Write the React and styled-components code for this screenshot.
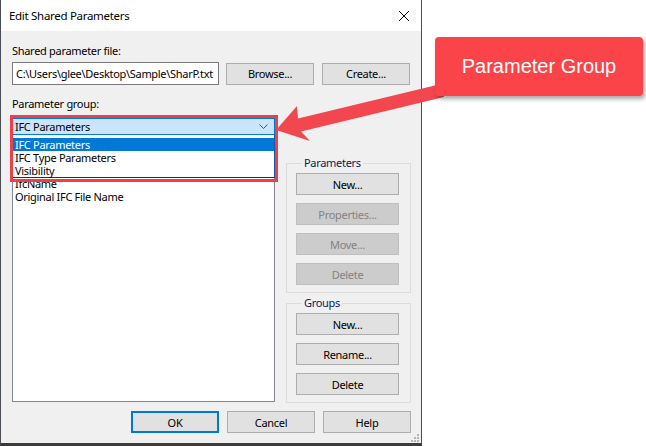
import React from 'react'
import styled, { createGlobalStyle } from 'styled-components'

const GlobalStyle = createGlobalStyle`
  html, body {
    margin: 0;
    padding: 0;
    background: #ffffff;
  }
  body {
    font-family: "Noto Sans", "Open Sans", sans-serif;
    font-size: 11px;
    letter-spacing: -0.3px;
    color: #000;
  }
`

const Stage = styled.div`
  position: relative;
  width: 646px;
  height: 446px;
  overflow: hidden;
  background: #ffffff;
`

const Dialog = styled.div`
  position: relative;
  display: flex;
  flex-direction: column;
  box-sizing: border-box;
  width: 422px;
  height: 446px;
  background: #f0f0f0;
  border-left: 1px solid #4a4f55;
  border-right: 1px solid #4a4f55;
  border-bottom: 3px solid #3c3c3c;
`

const TitleBar = styled.div`
  display: flex;
  align-items: center;
  justify-content: space-between;
  height: 31px;
  padding: 0 8px 0 8px;
  background: #ffffff;
  font-size: 11.5px;
`

const CloseIcon = styled.svg`
  width: 12px;
  height: 12px;
  margin-right: 3px;
`

const Body = styled.div`
  display: flex;
  flex-direction: column;
  padding: 0 10px 0 11px;
`

const Label = styled.div`
  height: 16px;
  line-height: 16px;
  margin-top: ${p => p.$top}px;
  margin-bottom: ${p => p.$bottom}px;
`

const Row = styled.div`
  display: flex;
  align-items: center;
  gap: ${p => p.$gap || 8}px;
  justify-content: ${p => (p.$end ? 'flex-end' : 'flex-start')};
`

const TextBox = styled.div`
  box-sizing: border-box;
  width: 207px;
  height: 23px;
  padding: 0 3px;
  line-height: 21px;
  background: #ffffff;
  border: 1px solid #7a7a7a;
  white-space: nowrap;
  overflow: hidden;
`

const Button = styled.div`
  box-sizing: border-box;
  display: flex;
  align-items: center;
  justify-content: center;
  width: ${p => p.$w || 88}px;
  height: 22px;
  background: ${p => (p.$disabled ? '#cccccc' : '#e1e1e1')};
  border: ${p => (p.$default ? '2px solid #0078d7' : '1px solid ' + (p.$disabled ? '#bfbfbf' : '#adadad'))};
  color: ${p => (p.$disabled ? '#838383' : '#000')};
  white-space: nowrap;
`

const Main = styled.div`
  display: flex;
  gap: 11px;
  height: 284px;
`

const LeftColumn = styled.div`
  position: relative;
  display: flex;
  flex-direction: column;
  width: 263px;
`

const Combo = styled.div`
  box-sizing: border-box;
  display: flex;
  align-items: center;
  justify-content: space-between;
  height: 17px;
  padding: 0 6px 0 2px;
  background: #cce4f7;
  border: 1px solid #0078d7;
`

const Chevron = styled.svg`
  width: 9px;
  height: 5px;
`

/* rows above "IfcName" sit under the open drop-down, so start lower */
const ListBox = styled.div`
  flex: 1;
  box-sizing: border-box;
  padding-top: 41px;
  background: #ffffff;
  border: 1px solid #828790;
`

const ListItem = styled.div`
  height: 13px;
  line-height: 13px;
  padding-left: 2px;
  white-space: nowrap;
  background: ${p => (p.$selected ? '#0078d7' : 'transparent')};
  color: ${p => (p.$selected ? '#ffffff' : '#000')};
`

const DropList = styled.div`
  position: absolute;
  top: 17px;
  left: 0;
  right: 0;
  box-sizing: border-box;
  padding: 3px 0 0;
  height: 43px;
  background: #ffffff;
  border: 1px solid #0a5aa8;
  border-top: none;
  border-bottom-color: #1b3550;
`

const Highlight = styled.div`
  position: absolute;
  top: -3px;
  left: -2px;
  width: 268px;
  height: 67px;
  box-sizing: border-box;
  border: 3px solid #ef3f47;
`

const RightColumn = styled.div`
  display: flex;
  flex-direction: column;
  gap: 3px;
  width: 125px;
  padding-top: 38px;
`

const GroupBox = styled.fieldset`
  display: flex;
  flex-direction: column;
  gap: 8px;
  margin: 0;
  padding: 3px 11px 7px 9px;
  border: 1px solid #dcdcdc;
  min-width: 0;
`

const Legend = styled.legend`
  padding: 0 2px;
  margin-left: 6px;
  height: 14px;
  line-height: 14px;
  color: #0b1a55;
`

const Footer = styled(Row)`
  margin-top: 9px;
`

const Grip = styled.svg`
  position: absolute;
  right: 2px;
  bottom: 1px;
  width: 8px;
  height: 8px;
`

const Callout = styled.div`
  position: absolute;
  left: 435px;
  top: 37px;
  width: 208px;
  height: 59px;
  display: flex;
  align-items: center;
  justify-content: center;
  background: #fb434a;
  border-radius: 4px;
  box-shadow: 2px 3px 4px rgba(0, 0, 0, 0.35);
  color: #ffffff;
  font-family: "Liberation Sans", Arial, sans-serif;
  font-size: 20px;
  letter-spacing: 0;
`

const Arrow = styled.svg`
  position: absolute;
  left: 0;
  top: 0;
  width: 646px;
  height: 446px;
  pointer-events: none;
`

const fileItems = ['IfcName', 'Original IFC File Name']
const groupItems = ['IFC Parameters', 'IFC Type Parameters', 'Visibility']

export default function App() {
  return (
    <Stage>
      <GlobalStyle />
      <Dialog>
        <TitleBar>
          <span>Edit Shared Parameters</span>
          <CloseIcon viewBox="0 0 12 12">
            <path d="M1 1 L11 11 M11 1 L1 11" stroke="#000" strokeWidth="1" fill="none" />
          </CloseIcon>
        </TitleBar>
        <Body>
          <Label $top={12} $bottom={3}>Shared parameter file:</Label>
          <Row $gap={7}>
            <TextBox>C:\Users\glee\Desktop\Sample\SharP.txt</TextBox>
            <Button>Browse...</Button>
            <Button style={{ marginLeft: 1 }}>Create...</Button>
          </Row>
          <Label $top={11} $bottom={6}>Parameter group:</Label>
          <Main>
            <LeftColumn>
              <Combo>
                <span>IFC Parameters</span>
                <Chevron viewBox="0 0 9 5">
                  <path d="M0.5 0.5 L4.5 4.5 L8.5 0.5" stroke="#505050" strokeWidth="1" fill="none" />
                </Chevron>
              </Combo>
              <ListBox>
                {fileItems.map(name => (
                  <ListItem key={name}>{name}</ListItem>
                ))}
              </ListBox>
              <DropList>
                {groupItems.map((name, i) => (
                  <ListItem key={name} $selected={i === 0}>{name}</ListItem>
                ))}
              </DropList>
              <Highlight />
            </LeftColumn>
            <RightColumn>
              <GroupBox>
                <Legend>Parameters</Legend>
                <Button $w={103}>New...</Button>
                <Button $w={103} $disabled>Properties...</Button>
                <Button $w={103} $disabled>Move...</Button>
                <Button $w={103} $disabled>Delete</Button>
              </GroupBox>
              <GroupBox>
                <Legend>Groups</Legend>
                <Button $w={103}>New...</Button>
                <Button $w={103}>Rename...</Button>
                <Button $w={103}>Delete</Button>
              </GroupBox>
            </RightColumn>
          </Main>
          <Footer $end $gap={8}>
            <Button $default>OK</Button>
            <Button>Cancel</Button>
            <Button>Help</Button>
          </Footer>
        </Body>
        <Grip viewBox="0 0 8 8">
          {[[6, 0], [3, 3], [6, 3], [0, 6], [3, 6], [6, 6]].map(([x, y]) => (
            <rect key={`${x}-${y}`} x={x} y={y} width="2" height="2" fill="#b4b4b4" />
          ))}
        </Grip>
      </Dialog>
      <Arrow viewBox="0 0 646 446">
        <polygon
          points="276,130 297,106 298,118.5 441,84 444,97 301,131.5 310,141"
          fill="#f2474e"
        />
      </Arrow>
      <Callout>Parameter Group</Callout>
    </Stage>
  )
}
